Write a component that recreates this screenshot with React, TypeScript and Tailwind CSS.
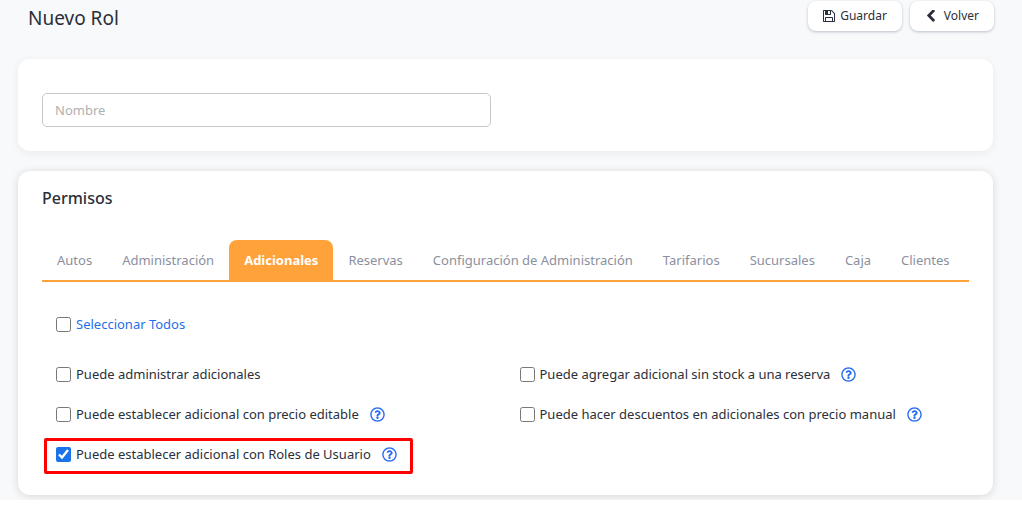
import React, { useState } from 'react';
import { FaRegQuestionCircle } from 'react-icons/fa';

const tabs = [
  'Autos',
  'Administración',
  'Adicionales',
  'Reservas',
  'Configuración de Administración',
  'Tarifarios',
  'Sucursales',
  'Caja',
  'Clientes',
];

interface Permission {
  id: string;
  label: string;
  help?: boolean;
  highlighted?: boolean;
}

const permissions: Permission[] = [
  { id: 'administrar', label: 'Puede administrar adicionales' },
  { id: 'sin-stock', label: 'Puede agregar adicional sin stock a una reserva', help: true },
  { id: 'precio-editable', label: 'Puede establecer adicional con precio editable', help: true },
  { id: 'descuentos', label: 'Puede hacer descuentos en adicionales con precio manual', help: true },
  { id: 'roles', label: 'Puede establecer adicional con Roles de Usuario', help: true, highlighted: true },
];

function SaveIcon() {
  return (
    <svg viewBox="0 128 1536 1536" className="h-3 w-3" fill="currentColor" aria-hidden="true">
      <path d="M384 1536h768v-384h-768v384zm896 0h128v-896q0-14-10-38.5t-20-34.5l-281-281q-10-10-34-20t-39-10v416q0 40-28 68t-68 28h-576q-40 0-68-28t-28-68v-416h-128v1280h128v-416q0-40 28-68t68-28h832q40 0 68 28t28 68v416zm-384-928v-320q0-13-9.5-22.5t-22.5-9.5h-192q-13 0-22.5 9.5t-9.5 22.5v320q0 13 9.5 22.5t22.5 9.5h192q13 0 22.5-9.5t9.5-22.5zm640 32v928q0 40-28 68t-68 28h-1344q-40 0-68-28t-28-68v-1344q0-40 28-68t68-28h928q40 0 88 20t76 48l280 280q28 28 48 76t20 88z" />
    </svg>
  );
}

function BackIcon() {
  return (
    <svg viewBox="256 128 1344 1536" className="h-3 w-3" fill="currentColor" aria-hidden="true">
      <path d="M1427 301l-531 531 531 531q19 19 19 45t-19 45l-166 166q-19 19-45 19t-45-19l-742-742q-19-19-19-45t19-45l742-742q19-19 45-19t45 19l166 166q19 19 19 45t-19 45z" />
    </svg>
  );
}

interface CheckProps {
  id: string;
  label: string;
  checked: boolean;
  onChange: () => void;
  className?: string;
}

function Check({ id, label, checked, onChange, className = '' }: CheckProps) {
  return (
    <div className="flex items-center gap-[5px]">
      <input
        id={id}
        type="checkbox"
        checked={checked}
        onChange={onChange}
        className="h-[15px] w-[15px] accent-[#1a73e8]"
      />
      <label htmlFor={id} className={className}>
        {label}
      </label>
    </div>
  );
}

export default function App() {
  const [activeTab, setActiveTab] = useState('Adicionales');
  const [selected, setSelected] = useState<string[]>(['roles']);

  const allSelected = selected.length === permissions.length;

  const toggle = (id: string) => {
    setSelected(selected.includes(id) ? selected.filter(s => s !== id) : [...selected, id]);
  };

  const toggleAll = () => {
    setSelected(allSelected ? [] : permissions.map(p => p.id));
  };

  return (
    <div className="flex min-h-screen flex-col bg-[#f8f9fb] font-['Noto_Sans','Open_Sans',sans-serif] text-[13px] leading-5 text-[#2b2f3a]">
      <header className="flex items-start justify-between pr-7 pl-7">
        <h1 className="pt-1 text-[19px] leading-7">Nuevo Rol</h1>
        <div className="flex gap-2 pt-px text-xs">
          <button className="flex h-[30px] items-center gap-[5px] rounded-lg bg-white px-[15px] shadow-[0_1px_3px_rgba(40,60,90,0.3)]">
            <SaveIcon />
            Guardar
          </button>
          <button className="flex h-[30px] items-center gap-[7px] rounded-lg bg-white px-[15px] shadow-[0_1px_3px_rgba(40,60,90,0.3)]">
            <BackIcon />
            Volver
          </button>
        </div>
      </header>

      <main className="flex flex-col gap-5 pt-[27px] pr-[29px] pb-[5px] pl-[18px]">
        <section className="rounded-xl bg-white px-6 pt-[34px] pb-6 shadow-[0_2px_10px_rgba(0,0,0,0.06)]">
          <div className="w-1/2 pr-[15px]">
            <input
              type="text"
              aria-label="Nombre"
              placeholder="Nombre"
              className="block h-[34px] w-full rounded-[5px] border border-[#c8c8c8] px-3 placeholder:text-[#b0b0b0]"
            />
          </div>
        </section>

        <section className="rounded-xl bg-white px-6 pt-[15px] pb-[21px] shadow-[0_1px_8px_rgba(0,0,0,0.14)]">
          <h2 className="text-base leading-6 font-medium">Permisos</h2>

          <div role="tablist" className="mt-[30px] flex border-b-2 border-[#ffa23a]">
            {tabs.map(tab => (
              <button
                key={tab}
                role="tab"
                aria-selected={tab === activeTab}
                onClick={() => setActiveTab(tab)}
                className={`h-10 rounded-t-lg px-[15px] whitespace-nowrap ${
                  tab === activeTab ? 'bg-[#ffa23a] font-bold text-white' : 'text-[#8b90a0]'
                }`}
              >
                {tab}
              </button>
            ))}
          </div>

          <div className="pt-8 pl-[14px]">
            <Check
              id="todos"
              label="Seleccionar Todos"
              checked={allSelected}
              onChange={toggleAll}
              className="text-[#1f6feb]"
            />
          </div>

          <div className="mt-5 grid grid-cols-2">
            {permissions.map(permission => (
              <div key={permission.id} className="relative flex h-10 items-center gap-[11px] pl-[14px]">
                <Check
                  id={permission.id}
                  label={permission.label}
                  checked={selected.includes(permission.id)}
                  onChange={() => toggle(permission.id)}
                />
                {permission.help && (
                  <button aria-label="Ayuda" className="text-[#2a6df0]">
                    <FaRegQuestionCircle className="h-[15px] w-[15px]" />
                  </button>
                )}
                {permission.highlighted && (
                  <div className="pointer-events-none absolute top-1 left-[2px] h-9 w-[369px] rounded-[2px] border-3 border-[#ff0000]" />
                )}
              </div>
            ))}
          </div>
        </section>
      </main>

      <footer className="flex-1 bg-white" />
    </div>
  );
}
